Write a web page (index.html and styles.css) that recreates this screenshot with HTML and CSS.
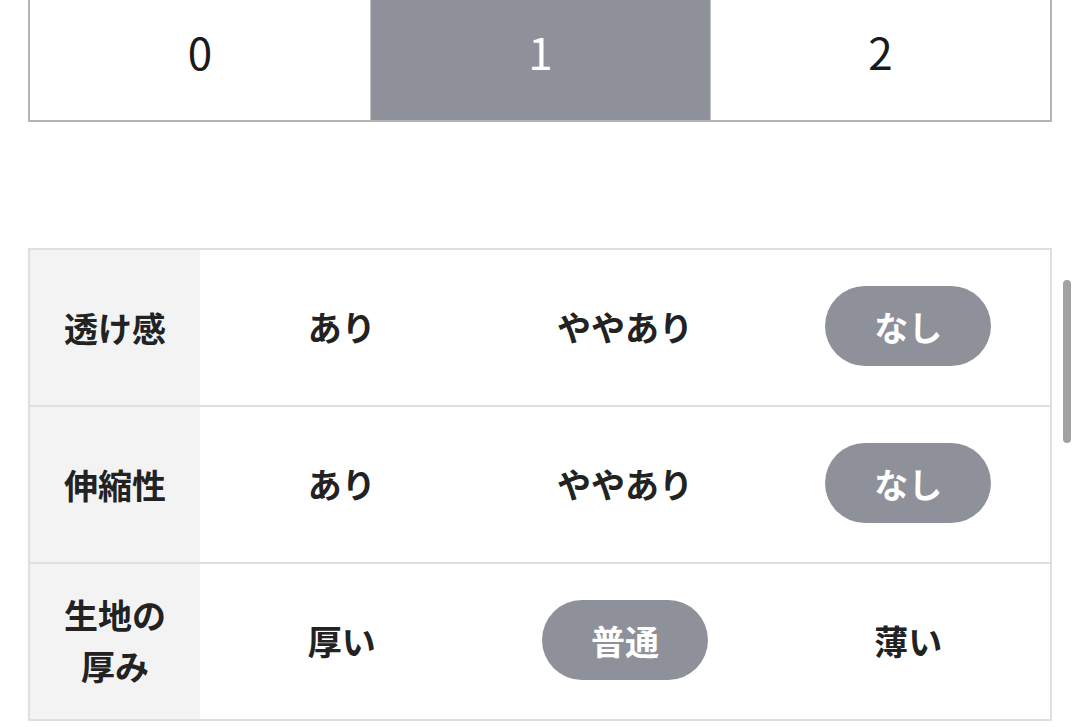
FILE: index.html
```html
<!DOCTYPE html>
<html lang="ja">
<head>
    <meta charset="UTF-8">
    <meta name="viewport" content="width=device-width, initial-scale=1.0">
    <title>商品詳細</title>
    <link rel="stylesheet" href="styles.css">
</head>
<body>
    <div class="page">
        <div class="segments">
            <div class="segment">0</div>
            <div class="segment active">1</div>
            <div class="segment">2</div>
        </div>

        <div class="spec">
            <div class="spec-row">
                <div class="spec-label">透け感</div>
                <div class="spec-value">あり</div>
                <div class="spec-value">ややあり</div>
                <div class="spec-value"><span class="pill">なし</span></div>
            </div>
            <div class="spec-row">
                <div class="spec-label">伸縮性</div>
                <div class="spec-value">あり</div>
                <div class="spec-value">ややあり</div>
                <div class="spec-value"><span class="pill">なし</span></div>
            </div>
            <div class="spec-row">
                <div class="spec-label multi">生地の<br>厚み</div>
                <div class="spec-value">厚い</div>
                <div class="spec-value"><span class="pill">普通</span></div>
                <div class="spec-value">薄い</div>
            </div>
        </div>
    </div>
    <div class="scrollbar"></div>
</body>
</html>
```

FILE: styles.css
```css
body {
    margin: 0;
    background: #ffffff;
    font-family: "Noto Sans CJK JP", "Noto Sans", sans-serif;
    color: #222222;
    overflow: hidden;
}
.page {
    padding: 0 28px;
}
.segments {
    display: grid;
    grid-template-columns: repeat(3, 1fr);
    margin-top: -10px;
    height: 128px;
    border: 2px solid #b5b5b5;
}
.segment {
    display: flex;
    justify-content: center;
    align-items: center;
    padding-bottom: 10px;
    font-size: 44px;
    font-weight: 400;
    color: #1a1a1a;
}
.segment + .segment {
    border-left: 1px solid #c4c4c4;
}
.segment.active {
    background: #8e9199;
    color: #ffffff;
}
.spec {
    margin-top: 126px;
    border: 2px solid #dedee3;
}
.spec-row {
    display: grid;
    grid-template-columns: 170px 1fr 1fr 1fr;
    height: 155px;
}
.spec-row + .spec-row {
    border-top: 2px solid #dedee3;
}
.spec-label {
    display: flex;
    justify-content: center;
    align-items: center;
    background: #f3f3f4;
    font-size: 34px;
    font-weight: 700;
    text-align: center;
}
.spec-label.multi {
    line-height: 51px;
    padding-bottom: 3px;
}
.spec-value {
    display: flex;
    justify-content: center;
    align-items: center;
    padding-bottom: 3px;
    font-size: 34px;
    font-weight: 700;
}
.pill {
    display: flex;
    justify-content: center;
    align-items: center;
    width: 166px;
    height: 80px;
    border-radius: 40px;
    background: #8e9199;
    color: #ffffff;
}
.scrollbar {
    position: absolute;
    left: 1063px;
    top: 280px;
    width: 8px;
    height: 163px;
    border-radius: 4px;
    background: #a2a2a2;
}
```
